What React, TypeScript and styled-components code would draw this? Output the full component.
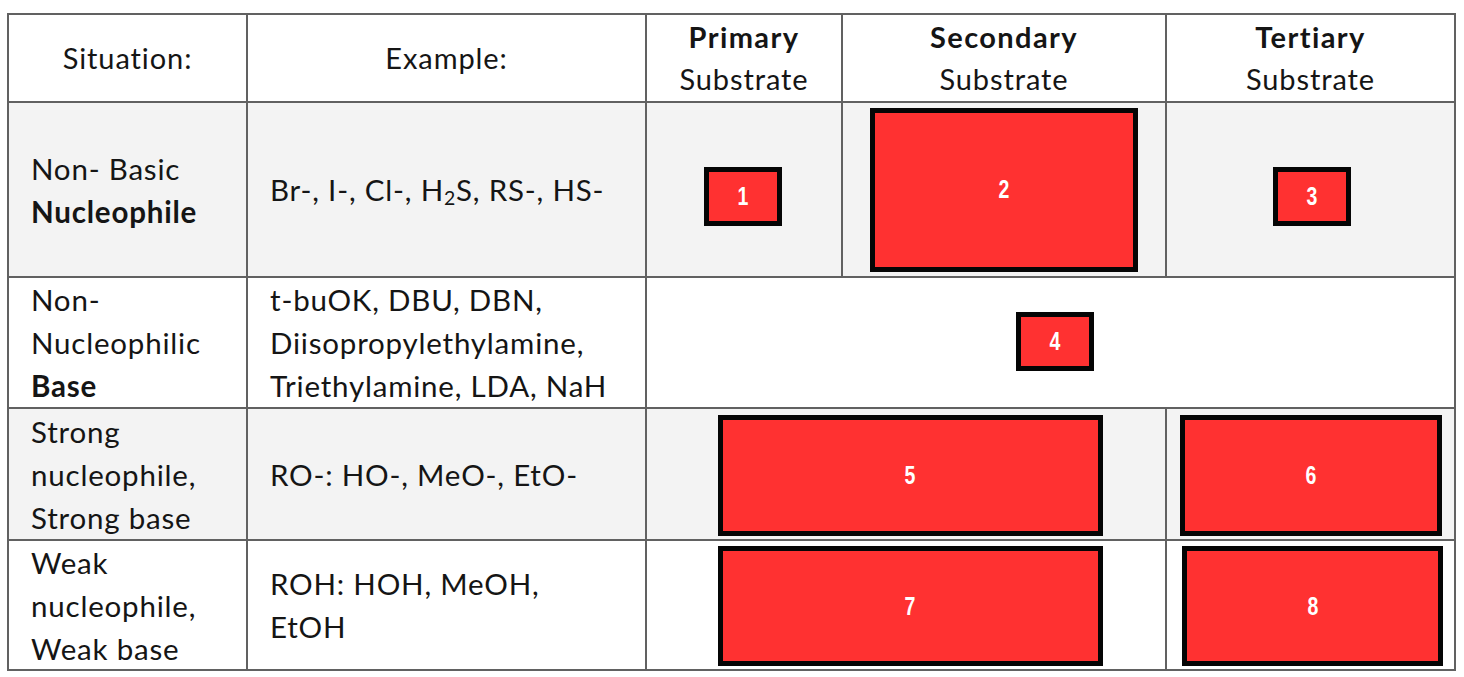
import React from "react";
import styled, { createGlobalStyle } from "styled-components";

const GlobalStyle = createGlobalStyle`
  html, body {
    margin: 0;
    padding: 0;
    background: #ffffff;
  }
  body {
    font-family: Lato, "Open Sans", "Noto Sans", sans-serif;
    color: #151515;
  }
`;

const LINE = "#616161";

const Page = styled.div`
  padding: 13px 0 0 7px;
`;

const Grid = styled.div`
  display: grid;
  width: fit-content;
  grid-template-columns: 237px 397px 194px 322px 287px;
  grid-template-rows: 86px 173px 129px 130px 128px;
  gap: 2px;
  background: ${LINE};
  border: 2px solid ${LINE};
`;

const HeadCell = styled.div`
  background: #ffffff;
  display: flex;
  flex-direction: column;
  align-items: center;
  justify-content: center;
  font-size: 29px;
  line-height: 42px;
  letter-spacing: 0.9px;
`;

const HeadStrong = styled.span`
  font-weight: 700;
  letter-spacing: 1.4px;
`;

const LabelCell = styled.div<{ $shade?: boolean }>`
  background: ${(p) => (p.$shade ? "#f3f3f3" : "#ffffff")};
  display: flex;
  flex-direction: column;
  justify-content: center;
  padding: 0 2px 0 22px;
  font-size: 29.5px;
  line-height: 43px;
  letter-spacing: 0.8px;
  white-space: nowrap;
`;

const Strong = styled.span`
  font-weight: 700;
`;

const Sub = styled.sub`
  font-size: 0.66em;
  vertical-align: -0.18em;
  line-height: 0;
`;

const BoxCell = styled.div<{ $shade?: boolean; $span?: number }>`
  background: ${(p) => (p.$shade ? "#f3f3f3" : "#ffffff")};
  grid-column: span ${(p) => p.$span ?? 1};
  display: flex;
  align-items: center;
  justify-content: center;
`;

const Box = styled.div<{ $w: number; $h: number; $dx?: number; $dy?: number }>`
  box-sizing: border-box;
  width: ${(p) => p.$w}px;
  height: ${(p) => p.$h}px;
  margin-left: ${(p) => (p.$dx ?? 0) * 2}px;
  margin-top: ${(p) => (p.$dy ?? 0) * 2}px;
  background: #ff3131;
  border: 5px solid #050505;
  display: flex;
  align-items: center;
  justify-content: center;
`;

const Num = styled.span`
  display: inline-block;
  color: #ffffff;
  font-family: "Liberation Sans", Arial, sans-serif;
  font-weight: 700;
  font-size: 25px;
  transform: scaleX(0.78);
`;

export default function App() {
  return (
    <>
      <GlobalStyle />
      <Page>
        <Grid>
          <HeadCell>Situation:</HeadCell>
          <HeadCell>Example:</HeadCell>
          <HeadCell>
            <HeadStrong>Primary</HeadStrong>
            <span>Substrate</span>
          </HeadCell>
          <HeadCell>
            <HeadStrong>Secondary</HeadStrong>
            <span>Substrate</span>
          </HeadCell>
          <HeadCell>
            <HeadStrong>Tertiary</HeadStrong>
            <span>Substrate</span>
          </HeadCell>

          <LabelCell $shade>
            <span>Non- Basic</span>
            <Strong>Nucleophile</Strong>
          </LabelCell>
          <LabelCell $shade>
            <span>
              Br-, I-, Cl-, H<Sub>2</Sub>S, RS-, HS-
            </span>
          </LabelCell>
          <BoxCell $shade>
            <Box $w={78} $h={59} $dx={-1} $dy={7}><Num>1</Num></Box>
          </BoxCell>
          <BoxCell $shade>
            <Box $w={268} $h={164}><Num>2</Num></Box>
          </BoxCell>
          <BoxCell $shade>
            <Box $w={78} $h={59} $dx={1} $dy={7}><Num>3</Num></Box>
          </BoxCell>

          <LabelCell>
            <span>Non-</span>
            <span>Nucleophilic</span>
            <Strong>Base</Strong>
          </LabelCell>
          <LabelCell>
            <span>t-buOK, DBU, DBN,</span>
            <span>Diisopropylethylamine,</span>
            <span>Triethylamine, LDA, NaH</span>
          </LabelCell>
          <BoxCell $span={3}>
            <Box $w={78} $h={59} $dx={4} $dy={-1}><Num>4</Num></Box>
          </BoxCell>

          <LabelCell $shade>
            <span>Strong</span>
            <span>nucleophile,</span>
            <span>Strong base</span>
          </LabelCell>
          <LabelCell $shade>
            <span>RO-: HO-, MeO-, EtO-</span>
          </LabelCell>
          <BoxCell $shade $span={2}>
            <Box $w={385} $h={121} $dx={4} $dy={1}><Num>5</Num></Box>
          </BoxCell>
          <BoxCell $shade>
            <Box $w={262} $h={121} $dy={1}><Num>6</Num></Box>
          </BoxCell>

          <LabelCell>
            <span>Weak</span>
            <span>nucleophile,</span>
            <span>Weak base</span>
          </LabelCell>
          <LabelCell>
            <span>ROH: HOH, MeOH,</span>
            <span>EtOH</span>
          </LabelCell>
          <BoxCell $span={2}>
            <Box $w={385} $h={120} $dx={4} $dy={1}><Num>7</Num></Box>
          </BoxCell>
          <BoxCell>
            <Box $w={261} $h={120} $dx={2} $dy={1}><Num>8</Num></Box>
          </BoxCell>
        </Grid>
      </Page>
    </>
  );
}
